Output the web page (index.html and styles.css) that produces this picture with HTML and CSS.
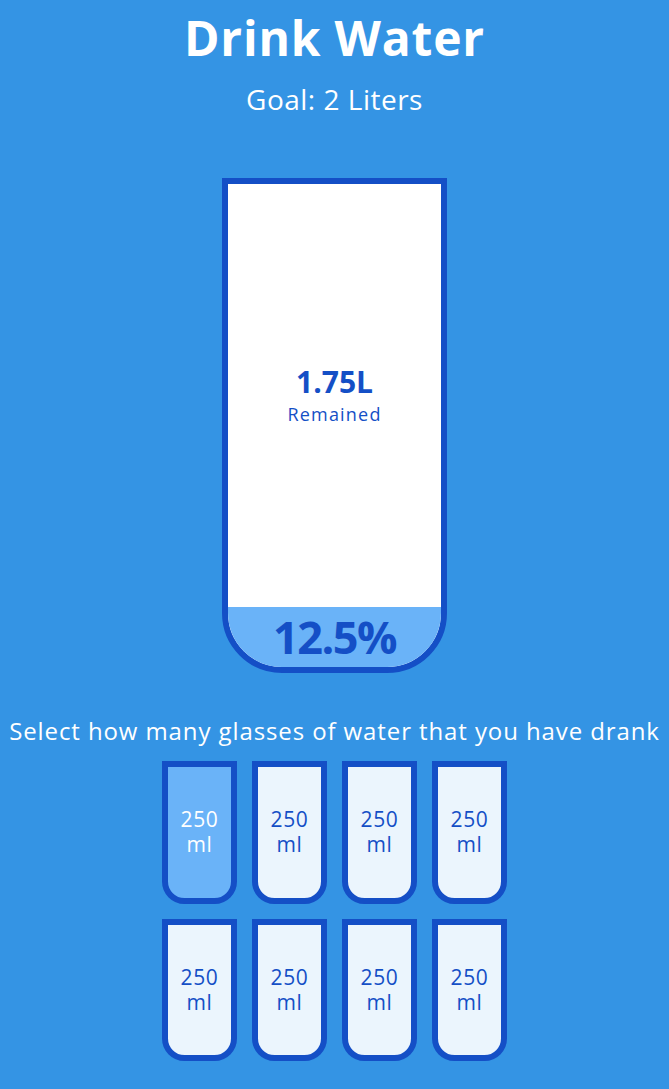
FILE: index.html
```html
<!DOCTYPE html>
<html lang="en">
<head>
<meta charset="UTF-8">
<title>Drink Water</title>
<link rel="stylesheet" href="styles.css">
</head>
<body>
  <h1 class="title">Drink Water</h1>
  <h3 class="goal">Goal: 2 Liters</h3>

  <div class="cup">
    <div class="remained">
      <span class="liters">1.75L</span>
      <small class="remained-label">Remained</small>
    </div>
    <div class="percentage" style="height: 12.5%">12.5%</div>
  </div>

  <p class="text">Select how many glasses of water that you have drank</p>

  <div class="cups">
    <div class="cup-small full">250 ml</div>
    <div class="cup-small">250 ml</div>
    <div class="cup-small">250 ml</div>
    <div class="cup-small">250 ml</div>
    <div class="cup-small">250 ml</div>
    <div class="cup-small">250 ml</div>
    <div class="cup-small">250 ml</div>
    <div class="cup-small">250 ml</div>
  </div>
</body>
</html>
```

FILE: styles.css
```css
* {
  box-sizing: border-box;
}

html, body {
  margin: 0;
}

body {
  background-color: #3494e4;
  color: #fff;
  font-family: "Open Sans", "Liberation Sans", sans-serif;
  display: flex;
  flex-direction: column;
  align-items: center;
  padding-top: 9px;
  padding-bottom: 20px;
  min-height: 1089px;
}

.title {
  font-size: 48px;
  font-weight: 700;
  line-height: 58px;
  letter-spacing: 0.8px;
  margin: 0;
}

.goal {
  font-size: 28px;
  font-weight: 400;
  line-height: 34px;
  letter-spacing: 0.5px;
  margin: 15px 0 17px;
}

.cup {
  background-color: #fff;
  border: 6px solid #144fc6;
  color: #144fc6;
  border-radius: 0 0 60px 60px;
  width: 225px;
  height: 495px;
  margin: 45px 0 43px;
  display: flex;
  flex-direction: column;
  overflow: hidden;
}

.remained {
  flex: 1;
  display: flex;
  flex-direction: column;
  align-items: center;
  justify-content: center;
  text-align: center;
  padding-bottom: 4px;
}

.liters {
  font-size: 30px;
  font-weight: 700;
  line-height: normal;
}

.remained-label {
  font-size: 18px;
  line-height: normal;
  letter-spacing: 1.2px;
}

.percentage {
  background-color: #6ab3f8;
  display: flex;
  align-items: center;
  justify-content: center;
  font-size: 45px;
  font-weight: 700;
  letter-spacing: -1.5px;
}

.text {
  font-size: 24px;
  line-height: 30px;
  letter-spacing: 0.9px;
  text-align: center;
  margin: 0 0 7.5px;
}

.cups {
  width: 420px;
  display: flex;
  flex-wrap: wrap;
  justify-content: center;
  align-items: center;
}

.cup-small {
  width: 75px;
  height: 142.5px;
  margin: 7.5px;
  border: 6px solid #144fc6;
  border-radius: 0 0 22.5px 22.5px;
  background-color: rgba(255, 255, 255, 0.9);
  color: #144fc6;
  font-size: 21px;
  line-height: 25px;
  letter-spacing: 0.6px;
  display: flex;
  align-items: center;
  justify-content: center;
  text-align: center;
}

.cup-small.full {
  background-color: #6ab3f8;
  color: #fff;
}
```
